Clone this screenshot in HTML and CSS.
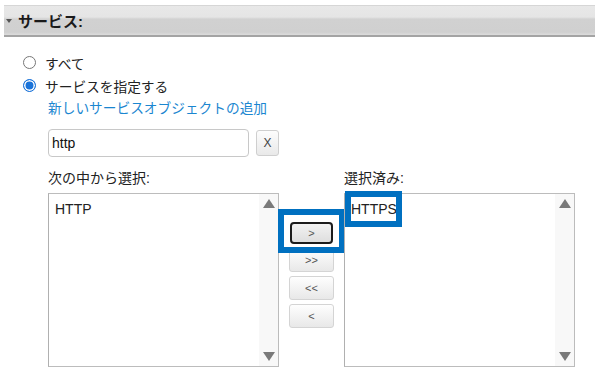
FILE: index.html
```html
<!DOCTYPE html>
<html>
<head>
    <title>サービス</title>
    <link rel="stylesheet" href="styles.css">
</head>
<body>
    <div class="section-header">
        <span class="caret"></span>
        <span class="section-title">サービス:</span>
    </div>

    <div class="options">
        <div class="radio-row">
            <span class="radio"></span>
            <span>すべて</span>
        </div>
        <div class="radio-row">
            <span class="radio checked"></span>
            <span>サービスを指定する</span>
        </div>
        <a class="add-link" href="#">新しいサービスオブジェクトの追加</a>
    </div>

    <div class="picker">
        <div class="filter-row">
            <input class="filter" type="text" value="http">
            <button class="clear-btn">X</button>
        </div>

        <div class="lists">
            <div class="list-col">
                <div class="list-label">次の中から選択:</div>
                <div class="list-box">
                    <div class="list-items">
                        <div class="list-item">HTTP</div>
                    </div>
                    <div class="scroll-track">
                        <span class="arrow-up"></span>
                        <span class="arrow-down"></span>
                    </div>
                </div>
            </div>

            <div class="move-buttons">
                <button class="move-btn focused">&gt;</button>
                <button class="move-btn">&gt;&gt;</button>
                <button class="move-btn">&lt;&lt;</button>
                <button class="move-btn">&lt;</button>
                <div class="highlight highlight-btn"></div>
            </div>

            <div class="list-col">
                <div class="list-label">選択済み:</div>
                <div class="list-box">
                    <div class="list-items">
                        <div class="list-item">HTTPS</div>
                    </div>
                    <div class="scroll-track">
                        <span class="arrow-up"></span>
                        <span class="arrow-down"></span>
                    </div>
                    <div class="highlight highlight-item"></div>
                </div>
            </div>
        </div>
    </div>
</body>
</html>
```

FILE: styles.css
```css
body {
    margin: 0;
    background-color: #fff;
    color: #222;
    font-family: "Liberation Sans", "Noto Sans CJK JP", sans-serif;
    font-size: 14px;
}

.section-header {
    margin: 5px 0 0 4px;
    height: 29px;
    border-top: 1px solid #d6d6d6;
    border-bottom: 2px solid #a4a4a4;
    background: linear-gradient(#e8e8e8 0%, #e5e5e5 38%, #d1d1d1 45%, #d0d0d0 90%, #dcdcdc 100%);
    display: flex;
    align-items: center;
}

.caret {
    width: 0;
    height: 0;
    margin: 0 6px 0 2px;
    border-left: 3px solid transparent;
    border-right: 3px solid transparent;
    border-top: 4px solid #555;
}

.section-title {
    font-weight: bold;
    font-size: 15px;
    color: #1a1a1a;
}

.options {
    margin-top: 14px;
    padding-left: 23px;
    font-size: 13.7px;
}

.radio-row {
    display: flex;
    align-items: center;
    height: 23px;
    gap: 9px;
}

.radio {
    box-sizing: border-box;
    width: 13px;
    height: 13px;
    border: 1px solid #777;
    border-radius: 50%;
    background: #fff;
}

.radio.checked {
    border: 1.5px solid #1a73d9;
    background: #1a73d9;
    box-shadow: inset 0 0 0 1.5px #fff;
}

.add-link {
    display: block;
    margin-left: 25px;
    line-height: 23px;
    color: #1a86d0;
    text-decoration: none;
}

.picker {
    margin-left: 48px;
}

.filter-row {
    display: flex;
    align-items: center;
    gap: 7px;
    margin-top: 9px;
}

.filter {
    box-sizing: border-box;
    width: 201px;
    height: 28px;
    margin: 0;
    padding: 0 3px;
    border: 1px solid #c8c8c8;
    border-radius: 4px;
    font-family: "Liberation Sans", sans-serif;
    font-size: 14px;
    color: #111;
}

.clear-btn {
    box-sizing: border-box;
    width: 23px;
    height: 26px;
    margin: 0;
    padding: 0;
    border: 1px solid #cfcfcf;
    border-radius: 3px;
    background: linear-gradient(#fdfdfd, #e9e9e9);
    font-family: "Liberation Sans", sans-serif;
    font-size: 12px;
    color: #444;
}

.lists {
    display: flex;
    margin-top: 10px;
}

.list-label {
    line-height: 23px;
    margin-bottom: 3px;
}

.list-box {
    position: relative;
    box-sizing: border-box;
    width: 231px;
    height: 174px;
    border: 1px solid #bcbcbc;
    border-left-color: #b0b0b0;
    display: flex;
}

.list-items {
    flex: 1;
    padding: 6px 0 0 6px;
}

.list-item {
    line-height: 18px;
    font-family: "Liberation Sans", sans-serif;
}

.scroll-track {
    width: 19px;
    background: #f8f8f8;
    display: flex;
    flex-direction: column;
    justify-content: space-between;
    align-items: center;
    padding: 5px 0 5px 0;
}

.arrow-up,
.arrow-down {
    width: 0;
    height: 0;
    border-left: 6px solid transparent;
    border-right: 6px solid transparent;
}

.arrow-up {
    border-bottom: 9px solid #7a7a7a;
}

.arrow-down {
    border-top: 9px solid #7a7a7a;
}

.move-buttons {
    position: relative;
    display: flex;
    flex-direction: column;
    gap: 4px;
    margin: 52px 10px 0 10px;
}

.move-btn {
    box-sizing: border-box;
    width: 45px;
    height: 24px;
    margin: 0;
    padding: 0;
    border: 1px solid #d4d4d4;
    border-radius: 3px;
    background: linear-gradient(#fefefe, #e8e8e8);
    font-family: "Liberation Sans", sans-serif;
    font-size: 11px;
    color: #555;
}

.move-btn.focused {
    border: 2px solid #1c1c1c;
    border-radius: 4px;
    width: 43px;
    height: 22px;
    margin: 3px 0 0 1px;
    background: linear-gradient(#f2f2f2, #dedede);
}

.highlight {
    position: absolute;
    box-sizing: border-box;
    border: 6px solid #0070c0;
}

.highlight-btn {
    left: -11px;
    top: -10px;
    width: 67px;
    height: 44px;
}

.highlight-item {
    left: 0;
    top: -3px;
    width: 57px;
    height: 36px;
}
```
